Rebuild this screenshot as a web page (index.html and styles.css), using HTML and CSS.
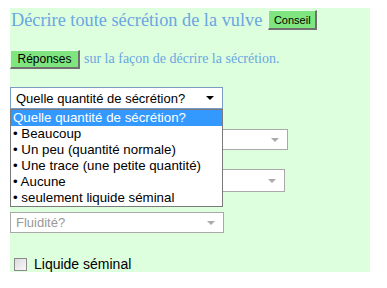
FILE: index.html
```html
<!DOCTYPE html>
<html>
<head>
<meta charset="utf-8">
<link rel="stylesheet" href="styles.css">
</head>
<body>
<div class="panel">
  <div class="title-row">
    <span class="title">Décrire toute sécrétion de la vulve</span>
    <span class="btn btn-conseil">Conseil</span>
  </div>
  <div class="answer-row">
    <span class="btn btn-rep">Réponses</span>
    <span class="answer-text">sur la façon de décrire la sécrétion.</span>
  </div>
  <div class="select-wrap">
    <div class="sel sel-main">
      <span>Quelle quantité de sécrétion?</span>
      <span class="arrow dark"></span>
    </div>
    <div class="dropdown">
      <div class="opt active">Quelle quantité de sécrétion?</div>
      <div class="opt">• Beaucoup</div>
      <div class="opt">• Un peu (quantité normale)</div>
      <div class="opt">• Une trace (une petite quantité)</div>
      <div class="opt">• Aucune</div>
      <div class="opt">• seulement liquide séminal</div>
    </div>
  </div>
  <div class="sel sel-b"><span></span><span class="arrow"></span></div>
  <div class="sel sel-c"><span></span><span class="arrow"></span></div>
  <div class="sel sel-fluid"><span>Fluidité?</span><span class="arrow"></span></div>
  <label class="check-row"><span class="box"></span><span>Liquide séminal</span></label>
</div>
</body>
</html>
```

FILE: styles.css
```css
html, body { margin: 0; padding: 0; background: #fff; }
body { font-family: "Liberation Sans", Arial, sans-serif; }
.panel {
  margin: 8px 0 0 10px;
  width: 360px;
  height: 264px;
  background: #ddffdd;
  display: flex;
  flex-direction: column;
  align-items: flex-start;
}
.title-row { display: flex; align-items: center; height: 22px; margin-top: 1px; }
.title {
  font-family: "Liberation Serif", "Times New Roman", serif;
  font-size: 18.3px;
  color: #6aa6e2;
  margin-left: 1px;
  line-height: 22px;
}
.btn {
  display: inline-flex;
  align-items: center;
  justify-content: center;
  background: #7fe57f;
  border-style: solid;
  border-width: 1px 2px 2px 1px;
  border-color: #e8ffe8 #707070 #707070 #e8ffe8;
  font-family: "Liberation Sans", Arial, sans-serif;
  color: #000;
  box-sizing: border-box;
}
.btn-conseil { width: 49px; height: 20px; font-size: 11px; margin-left: 6px; }
.answer-row { display: flex; align-items: center; margin-top: 18px; height: 20px; }
.btn-rep { width: 70px; height: 19px; font-size: 12px; }
.answer-text {
  font-family: "Liberation Serif", "Times New Roman", serif;
  font-size: 14px;
  color: #6aa6e2;
  margin-left: 4px;
}
.select-wrap { position: relative; margin-top: 18px; }
.sel {
  box-sizing: border-box;
  height: 22px;
  background: #fff;
  border: 1px solid #a9a9a9;
  display: flex;
  align-items: center;
  justify-content: space-between;
  font-size: 13px;
  padding: 0 8px 0 5px;
}
.sel-main { width: 213px; border-color: #7a9cc0; color: #000; }
.arrow {
  width: 0; height: 0;
  border-left: 4px solid transparent;
  border-right: 4px solid transparent;
  border-top: 4px solid #aaa;
}
.arrow.dark { border-top-color: #000; }
.dropdown {
  position: absolute;
  left: 0;
  top: 22px;
  width: 213px;
  box-sizing: border-box;
  border: 1px solid #7a7a7a;
  background: #fff;
}
.opt {
  height: 16px;
  line-height: 16px;
  font-size: 13.3px;
  padding-left: 2px;
  white-space: nowrap;
  color: #000;
}
.opt.active { background: #3399ff; color: #fff; }
.sel-b { width: 278px; height: 21px; margin-top: 20px; }
.sel-c { width: 275px; height: 23px; margin-top: 19px; }
.sel-fluid { width: 214px; height: 21px; margin-top: 20px; color: #999; }
.check-row {
  display: flex;
  align-items: center;
  margin-top: 23px;
  margin-left: 4px;
  font-size: 14px;
  color: #000;
}
.box {
  width: 11px; height: 11px;
  border: 1px solid #8a8a8a;
  background: linear-gradient(135deg, #dcdcdc, #f8f8f8);
  margin-right: 7px;
}
```
